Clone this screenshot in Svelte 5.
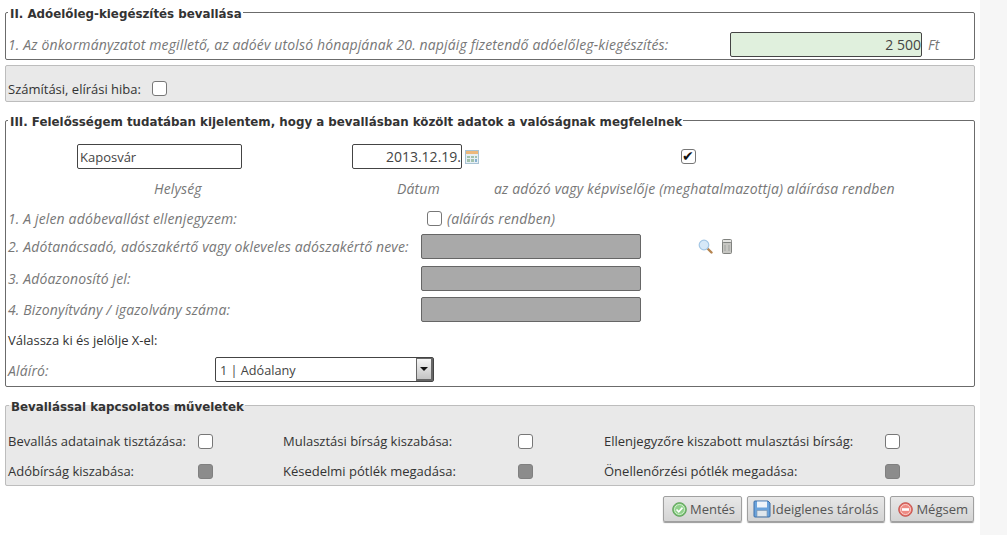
<script>
  let amount = $state('2 500');
  let place = $state('Kaposvár');
  let date = $state('2013.12.19.');
  let signer = $state('1 | Adóalany');
  let signed = $state(true);

  const ops = [
    [
      { label: 'Bevallás adatainak tisztázása:', disabled: false },
      { label: 'Mulasztási bírság kiszabása:', disabled: false },
      { label: 'Ellenjegyzőre kiszabott mulasztási bírság:', disabled: false }
    ],
    [
      { label: 'Adóbírság kiszabása:', disabled: true },
      { label: 'Késedelmi pótlék megadása:', disabled: true },
      { label: 'Önellenőrzési pótlék megadása:', disabled: true }
    ]
  ];
</script>

<div class="page">
  <main class="form">
    <fieldset class="box first">
      <legend>II. Adóelőleg-kiegészítés bevallása</legend>
      <div class="row amount-row">
        <span class="hint">1. Az önkormányzatot megillető, az adóév utolsó hónapjának 20. napjáig fizetendő adóelőleg-kiegészítés:</span>
        <input class="field amount" bind:value={amount} />
        <span class="hint">Ft</span>
      </div>
    </fieldset>

    <div class="grey-bar">
      <span class="plain">Számítási, elírási hiba:</span>
      <input type="checkbox" class="check" />
    </div>

    <fieldset class="box third">
      <legend>III. Felelősségem tudatában kijelentem, hogy a bevallásban közölt adatok a valóságnak megfelelnek</legend>

      <div class="sign-row">
        <input class="field place" bind:value={place} />
        <input class="field date" bind:value={date} />
        <svg class="cal" width="14" height="14" viewBox="0 0 14 14">
          <rect x="0.5" y="0.5" width="13" height="13" fill="#e6eff5" stroke="#a9c3d4" />
          <rect x="1" y="1" width="12" height="3" fill="#ecb87c" />
          <path d="M2 6h3v2H2zM6 6h3v2H6zM10 6h2v2h-2zM2 9h3v3H2zM6 9h3v3H6z" fill="#a3c2ac" />
          <path d="M10 9h2v3h-2z" fill="#86b0cf" />
        </svg>
        <input type="checkbox" class="check signed" bind:checked={signed} />
      </div>

      <div class="caption-row hint">
        <span class="cap-place">Helység</span>
        <span class="cap-date">Dátum</span>
        <span>az adózó vagy képviselője (meghatalmazottja) aláírása rendben</span>
      </div>

      <div class="row line countersign">
        <span class="hint">1. A jelen adóbevallást ellenjegyzem:</span>
        <input type="checkbox" class="check" />
        <span class="hint">(aláírás rendben)</span>
      </div>

      <div class="advisor-grid">
        <span class="hint">2. Adótanácsadó, adószakértő vagy okleveles adószakértő neve:</span>
        <div class="field off"></div>
        <div class="tools">
          <svg width="15" height="15" viewBox="0 0 15 15">
            <path d="M9 9l4.5 4.5" stroke="#b5844f" stroke-width="2.4" stroke-linecap="round" />
            <circle cx="6" cy="6" r="4.8" fill="#d6e8f7" stroke="#a3c6e4" stroke-width="1.2" />
          </svg>
          <svg width="12" height="15" viewBox="0 0 12 15">
            <path d="M1.5 3h9v10.5q0 1-1 1h-7q-1 0-1-1z" fill="#c6c6c2" stroke="#80827f" />
            <rect x="1.5" y="0.5" width="9" height="3" rx="1" fill="#e4e4e2" stroke="#80827f" />
            <path d="M4 6v6M8 6v6" stroke="#a0a29f" />
          </svg>
        </div>
        <span class="hint">3. Adóazonosító jel:</span>
        <div class="field off"></div>
        <span></span>
        <span class="hint">4. Bizonyítvány / igazolvány száma:</span>
        <div class="field off"></div>
        <span></span>
      </div>

      <div class="choose plain">Válassza ki és jelölje X-el:</div>

      <div class="row signer">
        <span class="hint signer-label">Aláíró:</span>
        <div class="select">
          <span class="select-value">{signer}</span>
          <span class="select-btn"><i></i></span>
        </div>
      </div>
    </fieldset>

    <fieldset class="box ops">
      <legend>Bevallással kapcsolatos műveletek</legend>
      {#each ops as line}
        <div class="ops-row">
          {#each line as op}
            <div class="op">
              <span class="plain">{op.label}</span>
              <input type="checkbox" class="check" disabled={op.disabled} />
            </div>
          {/each}
        </div>
      {/each}
    </fieldset>

    <div class="actions">
      <button class="save">
        <svg width="15" height="15" viewBox="0 0 15 15">
          <circle cx="7.5" cy="7.5" r="6.8" fill="#7cc576" stroke="#5a9e55" />
          <circle cx="7.5" cy="7.5" r="5" fill="#8fd08a" stroke="#d5efd2" />
          <path d="M4.5 7.5l2.2 2.3 3.8-4.2" fill="none" stroke="#fff" stroke-width="1.6" />
        </svg>
        Mentés
      </button>
      <button class="tight">
        <svg width="18" height="18" viewBox="0 0 18 18">
          <path d="M1 2q0-1 1-1h13l2 2v13q0 1-1 1H2q-1 0-1-1z" fill="#6aa3dc" stroke="#3c6fa8" />
          <rect x="4" y="1.5" width="10" height="6" fill="#eef4fa" />
          <rect x="4" y="10.5" width="10" height="6" fill="#dfe6ec" stroke="#7f95aa" stroke-width=".6" />
        </svg>
        Ideiglenes tárolás
      </button>
      <button>
        <svg width="15" height="15" viewBox="0 0 15 15">
          <circle cx="7.5" cy="7.5" r="6.8" fill="#e8736b" stroke="#c2504a" />
          <circle cx="7.5" cy="7.5" r="5" fill="#ee8a83" stroke="#f8d3d0" />
          <rect x="4" y="6.2" width="7" height="2.6" fill="#fff" />
        </svg>
        Mégsem
      </button>
    </div>
  </main>
</div>

<style>
  :global(body) {
    background: #f6f6f6;
  }

  .page {
    width: 980px;
    min-height: 535px;
    background: #fff;
    box-sizing: border-box;
    padding-left: 5px;
    font-family: "Open Sans", "Liberation Sans", sans-serif;
    font-size: 13px;
    color: #333;
    overflow: hidden;
  }

  .form {
    width: 970px;
    display: flex;
    flex-direction: column;
    padding-top: 4px;
  }

  .box {
    margin: 0;
    padding: 0;
    min-width: 0;
    border: 1px solid #6b6b6b;
    border-radius: 2px;
    box-sizing: border-box;
  }

  legend {
    margin-left: 0;
    padding: 4px 1px 0 2px;
    font-family: "DejaVu Sans", Verdana, sans-serif;
    font-size: 11.85px;
    font-weight: 700;
    line-height: 12px;
    color: #333;
    white-space: nowrap;
  }

  .hint {
    font-size: 14px;
    letter-spacing: 0.14px;
    font-style: italic;
    color: #777;
    white-space: nowrap;
  }

  .plain {
    color: #333;
    white-space: nowrap;
  }

  .row {
    display: flex;
    align-items: center;
  }

  .field {
    box-sizing: border-box;
    height: 25px;
    border: 1px solid #444;
    border-radius: 2px;
    font: inherit;
    font-size: 13px;
    color: #444;
    background: #fff;
    padding: 0 0 0 2px;
    outline: none;
  }

  .check {
    appearance: none;
    box-sizing: border-box;
    width: 15px;
    height: 15px;
    margin: 0;
    border: 1.5px solid #777;
    border-radius: 3px;
    background: #fff;
    position: relative;
    flex: none;
  }

  .check:checked::after {
    content: "✔";
    position: absolute;
    left: 0;
    top: -2px;
    font-size: 14px;
    line-height: 16px;
    color: #111;
  }

  .check:disabled {
    background: #8c8c8c;
    border-color: #808080;
  }

  .first {
    height: 56px;
    padding: 0 1px 0 2px;
  }

  .amount-row {
    height: 25px;
    margin-top: 12px;
  }

  .amount-row > .hint:first-child {
    width: 722px;
  }

  .amount {
    width: 192px;
    text-align: right;
    font-size: 14px;
    background: #e0f0dd;
    margin-right: 6px;
  }

  .grey-bar {
    height: 37px;
    margin-top: 5px;
    box-sizing: border-box;
    padding: 15px 2px 0;
    display: flex;
    align-items: flex-start;
    gap: 11px;
    background: #e9e9e9;
    border: 1px solid #bdbdbd;
    border-radius: 2px;
    line-height: 17px;
  }

  .third {
    height: 275px;
    margin-top: 10px;
    padding: 0 2px;
  }

  .sign-row {
    height: 25px;
    margin-top: 16px;
    display: flex;
    align-items: center;
    padding-left: 69px;
  }

  .place {
    width: 165px;
    padding-left: 2px;
  }

  .date {
    width: 110px;
    margin-left: 110px;
    text-align: right;
    font-size: 14px;
  }

  .cal {
    margin-left: 3px;
  }

  .signed {
    margin-left: 202px;
  }

  .caption-row {
    display: flex;
    margin-top: 11px;
    height: 18px;
    line-height: 18px;
  }

  .cap-place {
    margin-left: 146px;
    width: 243px;
  }

  .cap-date {
    width: 97px;
  }

  .countersign {
    margin-top: 11px;
    height: 18px;
  }

  .countersign > .hint:first-child {
    width: 419px;
  }

  .countersign .check {
    margin-right: 5px;
  }

  .advisor-grid {
    display: grid;
    grid-template-columns: 413px 220px 1fr;
    grid-auto-rows: 25px;
    row-gap: 6.5px;
    align-items: center;
    margin-top: 7px;
  }

  .off {
    height: 25px;
    background: #a9a9a9;
    border-color: #666;
  }

  .tools {
    display: flex;
    gap: 8px;
    padding-left: 57px;
    align-items: center;
  }

  .choose {
    margin-top: 9px;
    height: 18px;
    line-height: 18px;
  }

  .signer {
    margin-top: 8px;
  }

  .signer-label {
    width: 207px;
    padding-top: 2px;
  }

  .select {
    box-sizing: border-box;
    width: 219px;
    height: 25px;
    display: flex;
    align-items: center;
    justify-content: space-between;
    border: 1px solid #444;
    border-radius: 2px;
    font-size: 12.7px;
    color: #444;
  }

  .select-value {
    padding-left: 4px;
  }

  .select-btn {
    box-sizing: border-box;
    width: 17px;
    height: 23px;
    display: flex;
    align-items: center;
    justify-content: center;
    background: linear-gradient(#f4f4f4, #c4c4c4);
    border: 1px solid #666;
    border-width: 1px 2px 2px 1px;
  }

  .select-btn i {
    width: 0;
    height: 0;
    border: 4px solid transparent;
    border-top: 4px solid #111;
    border-bottom: 0;
  }

  .ops {
    height: 89px;
    margin-top: 10px;
    padding: 0 2px;
    background: #e9e9e9;
    border-color: #bdbdbd;
  }

  .ops legend {
    margin-left: 1px;
  }

  .ops-row {
    display: flex;
    height: 18px;
    align-items: center;
  }

  .ops-row:first-of-type {
    margin-top: 19px;
  }

  .ops-row + .ops-row {
    margin-top: 12px;
  }

  .op {
    display: flex;
    align-items: center;
    justify-content: space-between;
  }

  .op:nth-child(1) {
    width: 205px;
    margin-right: 70px;
  }

  .op:nth-child(2) {
    width: 250px;
    margin-right: 71px;
  }

  .op:nth-child(3) {
    width: 296px;
  }

  .actions {
    display: flex;
    justify-content: flex-end;
    gap: 5px;
    margin-top: 10px;
    padding-right: 1px;
  }

  button {
    box-sizing: border-box;
    height: 26px;
    display: flex;
    align-items: center;
    gap: 3px;
    padding: 0 5px 0 7px;
    border: 1px solid #a0a0a0;
    border-radius: 2px;
    background: linear-gradient(#e8e8e8, #d4d4d4);
    box-shadow: 0 1px 1px #999;
    font: inherit;
    font-size: 13px;
    color: #555;
  }

  button.save {
    padding: 0 6px 0 8px;
  }

  button.tight {
    gap: 1px;
    padding: 0 6px 0 5px;
  }
</style>
